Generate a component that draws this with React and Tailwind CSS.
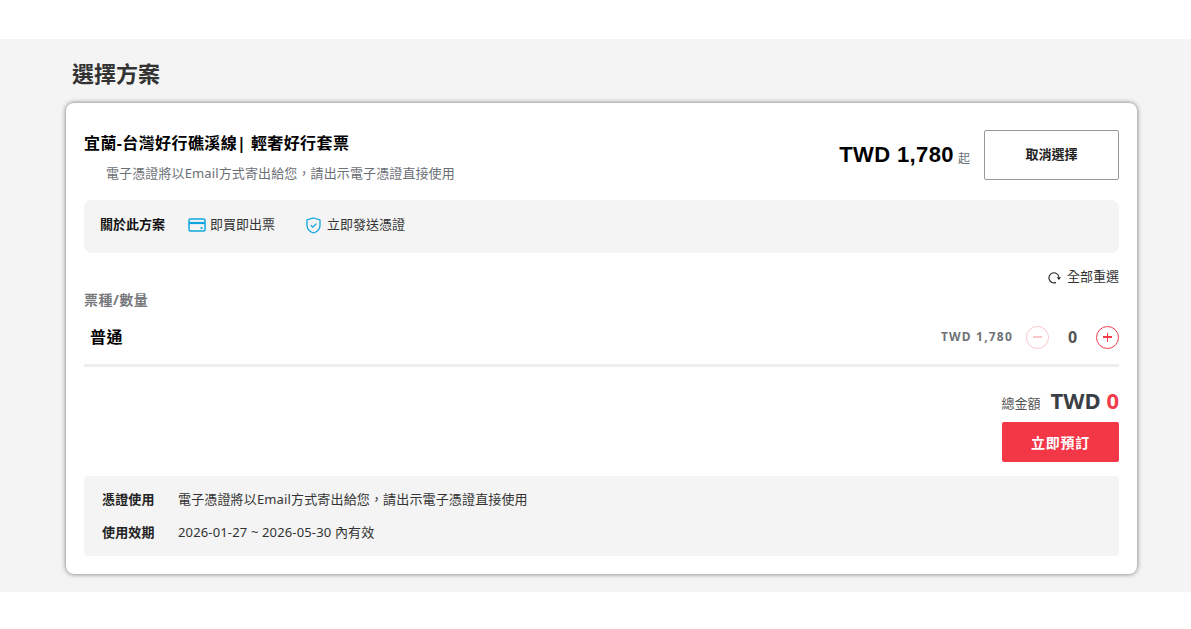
import React from 'react';

const FONT = { fontFamily: '"Noto Sans", "Noto Sans CJK TC", sans-serif' };

const CardIcon = () => (
  <svg width="18" height="14" viewBox="0 0 18 14" fill="none" stroke="#0ea5e0" strokeWidth="1.5">
    <rect x="1" y="1" width="16" height="12" rx="1.5" />
    <path d="M1 5h16" strokeWidth="2.2" />
    <path d="M12.5 10h2" strokeWidth="1.8" />
  </svg>
);

const ShieldIcon = () => (
  <svg width="15" height="17" viewBox="0 0 15 17" fill="none" stroke="#0ea5e0" strokeWidth="1.3">
    <path d="M7.5 1 L14 3 V8.5 C14 12 11 14.8 7.5 16 C4 14.8 1 12 1 8.5 V3 Z" />
    <path d="M4.8 8.2 L6.9 10.2 L10.4 6.6" />
  </svg>
);

const ResetIcon = () => (
  <svg width="13" height="13" viewBox="0 0 13 13" fill="none" stroke="#222" strokeWidth="1.1">
    <path d="M8 11.4 A5 5 0 1 1 10.9 6" />
    <path d="M8.7 6.2 H13 L10.9 8.9 Z" fill="#222" stroke="none" />
  </svg>
);

const App = () => {
  return (
    <div className="bg-white min-h-screen pt-[39px]" style={FONT}>
      <section className="bg-[#f4f4f4] h-[553px] pl-[66px] pr-[54px]">
        <h2 className="pl-[6px] pt-[20px] h-[64px] text-[22px] leading-[28px] font-bold text-[#333]">選擇方案</h2>

        <div className="bg-white rounded-lg h-[471px] px-[18px] pt-[27px] shadow-[0_0_5px_rgba(0,0,0,0.55)]">
          {/* Header */}
          <div className="flex justify-between h-[50px]">
            <div>
              <h3 className="text-[16px] leading-[26px] font-bold text-black tracking-[0.4px]">宜蘭-台灣好行礁溪線| 輕奢好行套票</h3>
              <p className="pl-[22px] mt-[8px] text-[13px] leading-[18px] text-[#6b6f76] tracking-[0.12px]">電子憑證將以Email方式寄出給您，請出示電子憑證直接使用</p>
            </div>
            <div className="flex items-center">
              <span className="text-[22px] leading-[30px] font-bold text-black tracking-[0.4px]" style={{ fontFamily: '"Liberation Sans", sans-serif' }}>TWD 1,780</span>
              <span className="ml-[4px] mt-[7px] text-[12px] leading-[16px] text-[#6b6f76]">起</span>
              <button className="ml-[14px] w-[135px] h-[50px] border border-[#999] rounded-[2px] bg-white text-[13px] font-bold text-[#222]">取消選擇</button>
            </div>
          </div>

          {/* About */}
          <div className="mt-[20px] h-[53px] pb-[3px] bg-[#f4f4f4] rounded-lg flex items-center pl-[16px]">
            <span className="text-[13px] font-bold text-[#111] w-[88px]">關於此方案</span>
            <span className="flex items-center gap-[4px] w-[118px] text-[13px] text-[#333]">
              <CardIcon />即買即出票
            </span>
            <span className="flex items-center gap-[6px] text-[13px] text-[#333]">
              <ShieldIcon />立即發送憑證
            </span>
          </div>

          {/* Reset */}
          <div className="mt-[15px] flex justify-end items-center gap-[6px] h-[18px] text-[13px] text-[#333]">
            <ResetIcon />全部重選
          </div>

          {/* Ticket */}
          <p className="mt-[4px] text-[14px] leading-[20px] font-bold text-[#77797d] tracking-[0.5px]">票種/數量</p>
          <div className="mt-[6px] h-[51px] pb-[6px] flex items-center justify-between pl-[6px] border-b-[3px] border-[#eeeeee]">
            <span className="mb-[1px] text-[16px] font-bold text-black tracking-[0.4px]">普通</span>
            <div className="flex items-center">
              <span className="text-[12px] font-bold text-[#6f7277] tracking-[1.2px]">TWD 1,780</span>
              <button className="ml-[13px] w-[23px] h-[23px] rounded-full border-[1.5px] border-[#f9c6cb] flex items-center justify-center">
                <span className="w-[9px] h-[1.5px] bg-[#f9c6cb]" />
              </button>
              <span className="w-[47px] text-center text-[16px] font-bold text-[#555]">0</span>
              <button className="w-[23px] h-[23px] rounded-full border-[1.5px] border-[#f33b4b] relative flex items-center justify-center">
                <span className="w-[9px] h-[1.5px] bg-[#f33b4b]" />
                <span className="absolute w-[1.5px] h-[9px] bg-[#f33b4b]" />
              </button>
            </div>
          </div>

          {/* Total */}
          <div className="mt-[18px] flex justify-end items-center h-[30px]">
            <span className="text-[13px] text-[#555] mt-[7px]">總金額</span>
            <span className="ml-[10px] text-[22px] leading-[30px] font-bold text-[#3a3f45]">
              TWD <span className="text-[#f33b4b]">0</span>
            </span>
          </div>
          <div className="mt-[7px] flex justify-end">
            <button className="w-[117px] h-[40px] bg-[#f33747] rounded-[2px] text-white text-[14px] font-bold tracking-[0.8px]">立即預訂</button>
          </div>

          {/* Notes */}
          <div className="mt-[14px] h-[80px] bg-[#f4f4f4] rounded-[4px] pl-[18px] pt-[13px] text-[13px] leading-[20px] text-[#333] tracking-[0.15px]">
            <div className="flex">
              <span className="w-[76px] font-bold text-[#222]">憑證使用</span>
              <span>電子憑證將以Email方式寄出給您，請出示電子憑證直接使用</span>
            </div>
            <div className="flex mt-[13px]">
              <span className="w-[76px] font-bold text-[#222]">使用效期</span>
              <span>2026-01-27 ~ 2026-05-30 內有效</span>
            </div>
          </div>
        </div>
      </section>
    </div>
  );
};

export default App;
